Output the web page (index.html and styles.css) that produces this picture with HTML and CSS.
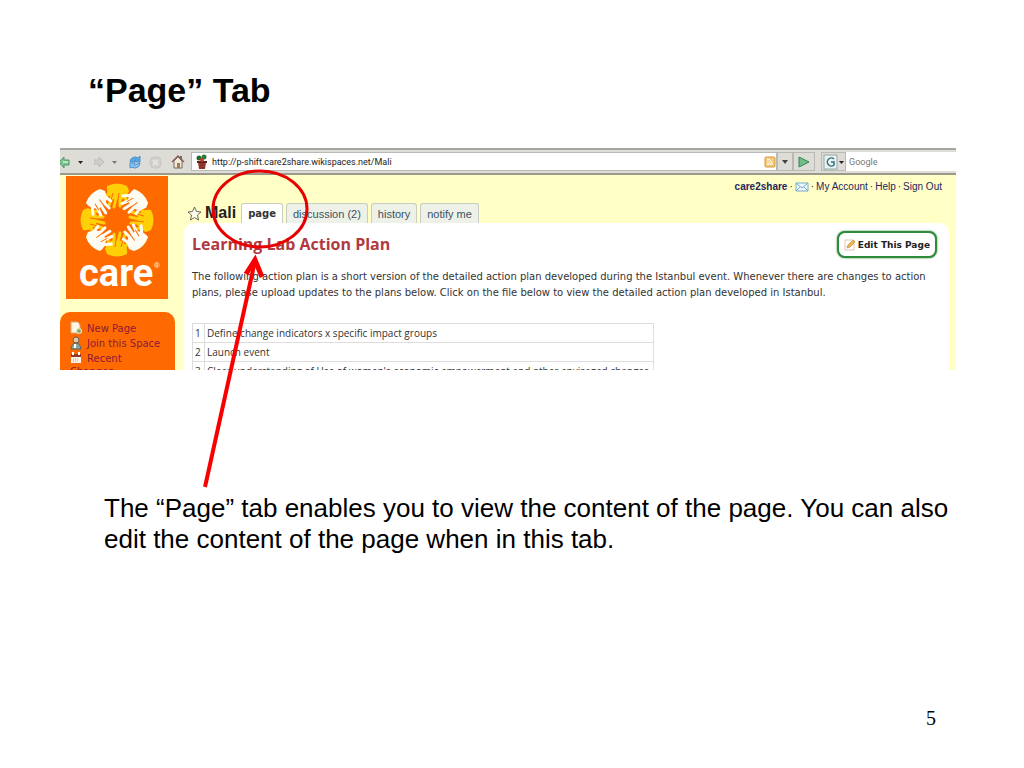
FILE: index.html
```html
<!DOCTYPE html>
<html lang="en">
<head>
    <meta charset="UTF-8">
    <meta name="viewport" content="width=device-width, initial-scale=1.0">
    <title>"Page" Tab</title>
    <link rel="stylesheet" href="styles.css">
</head>
<body>
    <main class="slide">
        <h1>“Page” Tab</h1>

        <div class="figure">
            <div class="browser">
                <!-- Browser toolbar -->
                <div class="toolbar">
                    <div class="nav-buttons">
                        <button type="button" aria-label="Back"><svg width="26" height="16" viewBox="0 0 26 16"><path d="M-1 8l5-5v3h5v5H4v3z" fill="#7cc48f" stroke="#4f9a68"/><path d="M3 8h5" stroke="#b9e5c3" stroke-width="2"/><path d="M18 7h5l-2.500 3z" fill="#222"/></svg></button>
                        <button type="button" aria-label="Forward"><svg width="26" height="16" viewBox="0 0 26 16"><path d="M0 6h5V3l5 5-5 5v-3H0z" fill="#cfcfcb" stroke="#bdbdb8"/><path d="M18 7h5l-2.500 3z" fill="#777"/></svg></button>
                        <button type="button" aria-label="Reload"><svg width="14" height="16" viewBox="0 0 14 16"><path d="M2 8a5 5 0 0 1 8-4l2-2v6H6l2-2a3 3 0 0 0-3 2z" fill="#5ba5df" stroke="#4a92d0"/><path d="M12 9a5 5 0 0 1-8 4l-2 1V9h5l-1 2a3 3 0 0 0 3-1z" fill="#8cc4ec" stroke="#4a92d0"/></svg></button>
                        <button type="button" aria-label="Stop"><svg width="14" height="16" viewBox="0 0 14 16"><rect x="1" y="3" width="11" height="11" rx="4" fill="#d0cfcb" stroke="#c9c8c4"/><path d="M4 6l5 5M9 6l-5 5" stroke="#e6e5e1" stroke-width="2"/></svg></button>
                        <button type="button" aria-label="Home"><svg width="14" height="16" viewBox="0 0 14 16"><path d="M3 7v7h8V7L7 3z" fill="#f2e8d8" stroke="#776a62"/><path d="M1 8l6-6 6 6" fill="none" stroke="#8b6358" stroke-width="1.500"/><path d="M6 9h3v5H6z" fill="#a87850"/><path d="M10 2v3" stroke="#776a62" stroke-width="2"/></svg></button>
                    </div>
                    <div class="address">
                        <svg width="12" height="16" viewBox="0 0 12 16"><path d="M2 8h8l-1 7H3z" fill="#8c3528"/><path d="M1 7h10v2H1z" fill="#5d211b"/><circle cx="3" cy="4" r="2.500" fill="#226a31"/><circle cx="8" cy="3" r="2.500" fill="#2f7b35"/><circle cx="6" cy="6" r="2" fill="#c8372c"/></svg>
                        <input type="text" value="http://p-shift.care2share.wikispaces.net/Mali" aria-label="Address">
                        <svg width="12" height="14" viewBox="0 0 12 14"><rect x="1" y="2" width="10" height="10" rx="1" fill="#f5c978" stroke="#d39b3d"/><circle cx="4" cy="9" r="1" fill="#fff"/><path d="M3 6a3 3 0 0 1 3 4M3 4a5 5 0 0 1 5 6" fill="none" stroke="#fff"/></svg>
                    </div>
                    <button type="button" class="tool-button" aria-label="Show history"><svg width="6" height="4"><path d="M0 0h6L3 4z" fill="#444"/></svg></button>
                    <button type="button" class="tool-button go" aria-label="Go"><svg width="12" height="12"><path d="M1 1l10 5-10 5z" fill="#72bd88" stroke="#348455"/></svg></button>
                    <div class="search">
                        <button type="button" class="tool-button engine" aria-label="Search engine"><svg width="22" height="16" viewBox="0 0 22 16"><rect x="1" y="1" width="13" height="14" fill="#e9f2f1" stroke="#91aaaa"/><path d="M11 5a4 4 0 1 0 0 6V8H8" fill="none" stroke="#347080" stroke-width="1.500"/><path d="M16 7h5l-2.500 3z" fill="#222"/></svg></button>
                        <input type="text" placeholder="Google" aria-label="Search">
                    </div>
                </div>

                <!-- Wiki page -->
                <div class="wiki">
                    <aside class="sidebar">
                        <svg class="logo" width="102" height="123" viewBox="0 0 102 123" role="img" aria-label="care">
                            <defs>
                                <g id="hand">
                                    <path d="M-10-34Q0-39 10-34L12-29Q9-22 4-20L-5-21Q-11-26-10-34Z" stroke="none"/>
                                    <path d="M-8-27L-13-21M-5-23L-8-15M-1-22L-3-13M3-22L3-14M8-26L9-18" fill="none" stroke-width="3" stroke-linecap="round"/>
                                    <path d="M-4-27L-6-20M2-27L1-20" fill="none" stroke="#ff6a00" stroke-width="1"/>
                                </g>
                            </defs>
                            <g transform="translate(51 44)">
                                <g fill="#ffcf08" stroke="#ffcf08">
                                    <use href="#hand"/>
                                    <use href="#hand" transform="rotate(90)"/>
                                    <use href="#hand" transform="rotate(180)"/>
                                    <use href="#hand" transform="rotate(270)"/>
                                </g>
                                <g fill="#fffdf3" stroke="#fffdf3">
                                    <use href="#hand" transform="rotate(45)"/>
                                    <use href="#hand" transform="rotate(135)"/>
                                    <use href="#hand" transform="rotate(225)"/>
                                    <use href="#hand" transform="rotate(315)"/>
                                </g>
                            </g>
                            <text class="logo-name" x="13" y="110">care</text>
                            <text class="logo-mark" x="88" y="92">®</text>
                        </svg>
                        <nav class="menu">
                            <svg width="12" height="14" viewBox="0 0 12 14"><path d="M1 1h7l2 3v8H1z" fill="#fff4e6" stroke="#d9a67d"/><circle cx="9" cy="10" r="3" fill="#d9dfad"/><path d="M9 8v4M7 10h4" stroke="#6f8651"/></svg>
                            <a href="#">New Page</a>
                            <svg width="12" height="14" viewBox="0 0 12 14"><circle cx="6" cy="4" r="3" fill="#e5c6a0" stroke="#665c55"/><path d="M1 13q1-6 5-6t5 6z" fill="#8ca79b" stroke="#53615c"/><path d="M5 8v4" stroke="#fff" stroke-width="2"/></svg>
                            <a href="#">Join this Space</a>
                            <svg width="12" height="14" viewBox="0 0 12 14"><path d="M1 3h10v9H1z" fill="#fff3e5"/><path d="M1 3h10v3H1z" fill="#963929"/><path d="M3 1v3M9 1v3" stroke="#fff" stroke-width="2"/><path d="M3 8h6M3 10h6" stroke="#d3a17f" stroke-dasharray="1 1"/></svg>
                            <a href="#">Recent</a>
                            <a href="#" class="wrapped">Changes</a>
                        </nav>
                    </aside>

                    <section class="main">
                        <div class="account">
                            <a href="#"><b>care2share</b></a> ·
                            <a href="#" aria-label="Messages"><svg width="14" height="10" viewBox="0 0 14 10"><path d="M1 1h12v8H1z" fill="#eef8fd" stroke="#76acc8"/><path d="M1 1l6 5 6-5M1 9l4-4M13 9L9 5" fill="none" stroke="#76acc8"/></svg></a> ·
                            <a href="#">My Account</a> · <a href="#">Help</a> · <a href="#">Sign Out</a>
                        </div>
                        <div class="tabs">
                            <svg width="15" height="15" viewBox="0 0 15 15"><path d="M7.500 1l2 4.500 4.500.5-3.500 3 1 5-4-2.500-4 2.500 1-5L1 6l4.500-.5z" fill="#fffff0" stroke="#66665c"/></svg>
                            <h2>Mali</h2>
                            <a href="#" class="tab active">page</a>
                            <a href="#" class="tab">discussion (2)</a>
                            <a href="#" class="tab">history</a>
                            <a href="#" class="tab">notify me</a>
                        </div>
                        <article class="content">
                            <div class="content-head">
                                <h3>Learning Lab Action Plan</h3>
                                <button type="button" class="edit"><svg width="12" height="14" viewBox="0 0 12 14"><path d="M1 2h9v10H1z" fill="#fff" stroke="#e5c3bb"/><path d="M3 10l1-3 5-5 2 2-5 5z" fill="#f1ba4d" stroke="#c9a05c"/></svg>Edit This Page</button>
                            </div>
                            <p>The following action plan is a short version of the detailed action plan developed during the Istanbul event. Whenever there are changes to action<br>plans, please upload updates to the plans below. Click on the file below to view the detailed action plan developed in Istanbul.</p>
                            <table>
                                <tr><td>1</td><td>Define change indicators x specific impact groups</td></tr>
                                <tr><td>2</td><td>Launch event</td></tr>
                                <tr><td>3</td><td>Clear understanding of Use of women's economic empowerment and other envisaged changes</td></tr>
                            </table>
                        </article>
                    </section>
                </div>
            </div>

            <!-- Circle and arrow pointing at the page tab -->
            <svg class="callout" width="260" height="342" viewBox="0 0 260 342" fill="none" stroke="#f80000">
                <ellipse cx="200" cy="61" rx="47" ry="38" stroke="#e60000" stroke-width="3"/>
                <path d="M145 339L195 113" stroke-width="4"/>
                <path d="M186 126L195 112L202 129" stroke-width="5"/>
            </svg>
        </div>

        <p class="caption">The “Page” tab enables you to view the content of the page. You can also edit the content of the page when in this tab.</p>
        <footer>5</footer>
    </main>
</body>
</html>
```
FILE: styles.css
```css
* {
    box-sizing: border-box;
}

body {
    margin: 0;
    background-color: #fff;
    color: #000;
    font-family: "Liberation Sans", Arial, sans-serif;
}

h1, h2, h3, p {
    margin: 0;
}

a {
    color: inherit;
    text-decoration: none;
}

button, input {
    padding: 0;
    border: none;
    background: none;
    font-family: inherit;
}

svg {
    display: block;
    flex: none;
}

/* Slide */
.slide {
    display: flex;
    flex-direction: column;
    min-height: 100vh;
    padding: 70px 68px 38px 60px;
}

h1 {
    padding-left: 28px;
    font-size: 34px;
    line-height: 40px;
}

.figure {
    position: relative;
    margin-top: 38px;
}

.callout {
    position: absolute;
    top: 0;
    left: 0;
    pointer-events: none;
}

.caption {
    margin-top: 123px;
    padding-left: 44px;
    font-size: 26px;
    line-height: 31px;
}

footer {
    margin-top: auto;
    padding-right: 20px;
    font-family: "Liberation Serif", serif;
    font-size: 20px;
    line-height: 24px;
    text-align: right;
}

/* Browser */
.browser {
    height: 222px;
    overflow: hidden;
}

.toolbar {
    display: flex;
    align-items: center;
    height: 27px;
    border-top: 2px solid #a5a5a3;
    border-bottom: 2px solid #99998c;
    background-color: #dedcd7;
}

.nav-buttons {
    display: flex;
    justify-content: space-between;
    width: 131px;
    padding-right: 6px;
}

.address {
    display: flex;
    flex: 1;
    align-items: center;
    gap: 4px;
    height: 19px;
    padding: 0 0 0 4px;
    border: 1px solid #b9b9b6;
    background-color: #fff;
}

.toolbar input {
    flex: 1;
    min-width: 0;
    color: #222;
    font-family: Roboto, sans-serif;
    font-size: 9px;
}

.toolbar input::placeholder {
    color: #777;
}

.tool-button {
    display: flex;
    align-items: center;
    justify-content: center;
    width: 16px;
    height: 19px;
    border: 1px solid #bbb9b3;
    background-color: #dedcd7;
}

.go {
    width: 22px;
}

.search {
    display: flex;
    gap: 3px;
    width: 135px;
    height: 19px;
    margin-left: 6px;
    background-color: #fff;
}

.engine {
    width: 25px;
}

/* Wiki page */
.wiki {
    display: flex;
    gap: 9px;
    padding-right: 7px;
    background-color: #ffffc6;
}

.sidebar {
    flex: none;
    width: 115px;
}

.logo {
    margin: 1px 0 13px 6px;
    background-color: #ff6a00;
}

.logo-name {
    fill: #fff;
    font-family: Roboto, sans-serif;
    font-size: 38px;
    font-weight: bold;
}

.logo-mark {
    fill: #fff;
    font-size: 8px;
}

.menu {
    display: grid;
    grid-template-columns: 12px 1fr;
    align-content: start;
    column-gap: 5px;
    height: 80px;
    padding: 9px 8px 0 10px;
    border-radius: 10px 10px 0 0;
    background-color: #ff6a00;
    color: #8b1a3c;
    font-family: "DejaVu Sans", sans-serif;
    font-size: 10px;
    line-height: 15px;
    white-space: nowrap;
}

.wrapped {
    grid-column: 1 / 3;
    line-height: 12px;
}

.main {
    flex: 1;
    min-width: 0;
}

.account {
    display: flex;
    justify-content: flex-end;
    align-items: center;
    gap: 2px;
    height: 23px;
    padding-right: 7px;
    color: #25255c;
    font-size: 10px;
}

.tabs {
    display: flex;
    align-items: center;
    gap: 3px;
    height: 25px;
    padding: 5px 0 0 3px;
}

.tabs h2 {
    margin-right: 2px;
    color: #222;
    font-size: 16px;
}

.tab {
    height: 20px;
    padding: 0 6px;
    border: 1px solid #c9cec5;
    border-bottom: none;
    border-radius: 3px 3px 0 0;
    background-color: #edf1e8;
    color: #3c5264;
    font-size: 11px;
    line-height: 20px;
}

.tab.active {
    background-color: #fff;
    color: #333;
    font-family: "DejaVu Sans", sans-serif;
    font-size: 10px;
    font-weight: bold;
}

.content {
    height: 160px;
    padding: 8px 12px 0 8px;
    border-radius: 10px 10px 0 0;
    background-color: #fff;
    color: #333;
    font-family: "DejaVu Sans", sans-serif;
    font-size: 10px;
    line-height: 16px;
}

.content-head {
    display: flex;
    justify-content: space-between;
    height: 38px;
}

h3 {
    color: #b03a40;
    font-family: "Open Sans", sans-serif;
    font-size: 16px;
    line-height: 26px;
}

.edit {
    display: flex;
    align-items: center;
    gap: 2px;
    height: 27px;
    padding: 0 5px;
    border: 2px solid #2f8a3a;
    border-radius: 8px;
    background-color: #fff;
    box-shadow: 0 0 2px #2f8a3a;
    color: #222;
    font-family: "DejaVu Sans", sans-serif;
    font-size: 9px;
    font-weight: bold;
}

.content p {
    white-space: nowrap;
}

table {
    width: 462px;
    margin-top: 22px;
    border-collapse: collapse;
    font-family: "Open Sans", sans-serif;
    font-size: 10px;
    line-height: 16px;
    white-space: nowrap;
}

td {
    height: 19px;
    padding: 0 2px;
    border: 1px solid #ddd;
}

td:first-child {
    width: 12px;
}
```
